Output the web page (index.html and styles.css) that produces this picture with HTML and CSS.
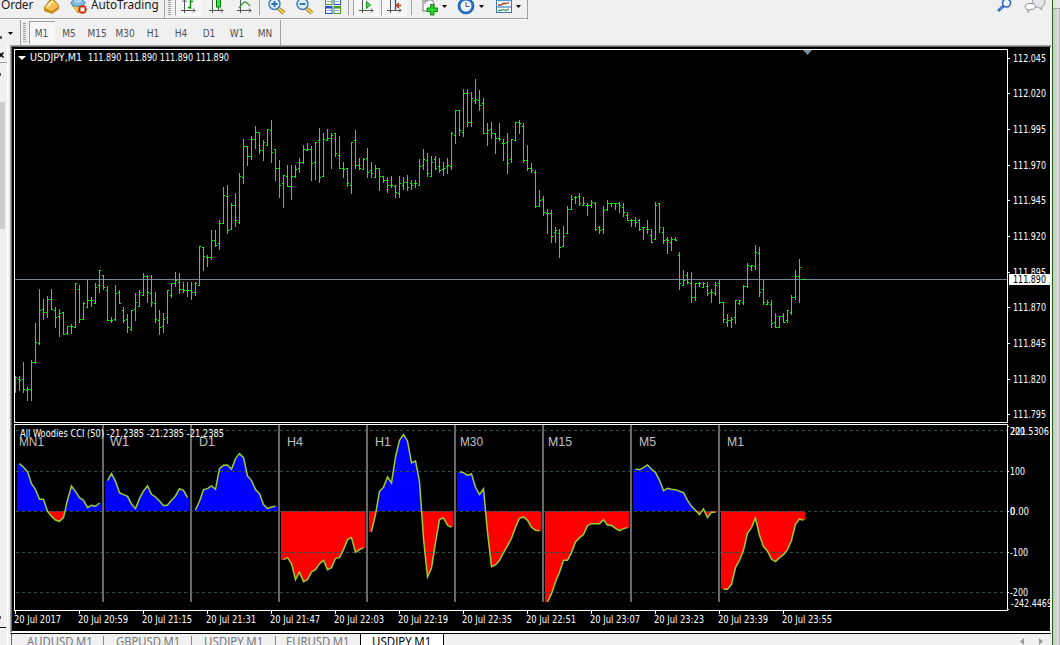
FILE: index.html
```html
<!DOCTYPE html>
<html lang="en">
<head>
<meta charset="utf-8">
<title>USDJPY,M1</title>
<link rel="stylesheet" href="styles.css">
</head>
<body>
<div class="app">
  <div class="main">
    <div class="bar-top">
      <div class="tools">
        <span class="cmd order">Order</span>
        <svg class="ico gold" width="19" height="18" viewBox="0 0 19 18"><path d="M2 8L8 0h4l5 6-7 7z" fill="#f2c14b" stroke="#b07b14"/><path d="M2 8l8 3 7-5v3l-7 5-8-3z" fill="#c98a1c"/><path d="M5 7l6-6" stroke="#fff2b8" stroke-width="2"/></svg>
        <svg class="ico auto" width="19" height="18" viewBox="0 0 19 18"><path d="M2 5l8 0 6 2-8 6z" fill="#f2cf4d" stroke="#c9961e"/><ellipse cx="8" cy="3" rx="7" ry="3.4" fill="#7db9e2" stroke="#4b86b4"/><ellipse cx="8" cy="0" rx="4" ry="3" fill="#a9d6f0"/><circle cx="12.500" cy="9.500" r="4.300" fill="#d8260f"/><rect x="10.500" y="7.500" width="4" height="4" fill="#fff"/></svg>
        <span class="cmd autotrading"><b>AutoTrading</b></span>
        <i class="sep sep-a"></i><i class="grip"></i>
        <span class="btn on"><svg width="16" height="14" viewBox="0 0 16 14"><path d="M3.500 0v13M0 10.500h14M12 8.500l2 2-2 2M1.500 2l2-2 2 2" class="axis"/><path d="M9.500 0v9M7 7.500h2M10 1.500h2" stroke="#0a930a" stroke-width="1.400" fill="none"/></svg></span>
        <span class="btn"><svg width="16" height="14" viewBox="0 0 16 14"><path d="M3.500 0v13M0 10.500h14M12 8.500l2 2-2 2" class="axis"/><path d="M9.500 0v10" stroke="#087808"/><rect x="7.500" y="-1" width="4" height="8" fill="#2ee648" stroke="#087808"/></svg></span>
        <span class="btn"><svg width="16" height="14" viewBox="0 0 16 14"><path d="M3.500 0v13M0 10.500h14M12 8.500l2 2-2 2" class="axis"/><path d="M2 8C5 5 6 2 8 2s3 2 5 4" stroke="#2f9c34" fill="none" stroke-width="1.300"/></svg></span>
        <i class="sep sep-b"></i>
        <span class="btn"><svg width="18" height="16" viewBox="0 0 18 16"><path d="M10 8l6 5" stroke="#b38212" stroke-width="4"/><path d="M10 8l6 5" stroke="#f3d35c" stroke-width="2"/><circle cx="6.500" cy="4" r="5.500" fill="#d8effb" stroke="#4580b5" stroke-width="1.500"/><path d="M3.500 4h6M6.500 1v6" stroke="#2c6ea6" stroke-width="1.800"/></svg></span>
        <span class="btn"><svg width="18" height="16" viewBox="0 0 18 16"><path d="M10 8l6 5" stroke="#b38212" stroke-width="4"/><path d="M10 8l6 5" stroke="#f3d35c" stroke-width="2"/><circle cx="6.500" cy="4" r="5.500" fill="#d8effb" stroke="#4580b5" stroke-width="1.500"/><path d="M3.500 4h6" stroke="#2c6ea6" stroke-width="1.800"/></svg></span>
        <span class="btn"><svg width="16" height="14" viewBox="0 0 16 14"><path d="M0 0h7.500v5H0zM8.500 6H16v8H8.500z" fill="#4a9a1c"/><path d="M8.500 0H16v5H8.500zM0 6h7.500v8H0z" fill="#2452cf"/><path d="M1 0h5.500v4H1zM9.500 0H15v4H9.500zM1 8.500h5.500V13H1zM9.500 8.500H15V13H9.500z" fill="#f4f8ff"/><path d="M2 1.500h4M10 1.500h4M2 10.500h4M10 10.500h4" stroke="#8faacb"/></svg></span>
        <i class="sep sep-c"></i>
        <span class="btn on"><svg width="16" height="14" viewBox="0 0 16 14"><path d="M3.500 0v13M0 10.500h14M12 8.500l2 2-2 2" class="axis"/><path d="M7.500 1.500l4 3.500-4 3.500z" fill="#3fe04e" stroke="#129020"/></svg></span>
        <span class="btn on btn-shift"><svg width="16" height="14" viewBox="0 0 16 14"><path d="M3.500 0v13M0 10.500h14M12 8.500l2 2-2 2" class="axis"/><path d="M8.500 0v10" stroke="#235e94" stroke-width="1.400"/><path d="M14 5.500H10M12 3L9.500 5.500 12 8" stroke="#b83a10" fill="none" stroke-width="1.500"/></svg></span>
        <i class="sep sep-d"></i>
        <svg class="ico doc" width="17" height="16" viewBox="0 0 17 16"><path d="M1 0h9l2 3v8H1z" fill="#fff" stroke="#777"/><path d="M3 4V1h3" stroke="#777" fill="none"/><path d="M8.500 4.500h3.500V8H15.500v3.500H12V15H8.500v-3.500H5V8h3.500z" fill="#28d628" stroke="#0b8a10"/></svg>
        <i class="drop d1"></i>
        <svg class="ico clock" width="18" height="16" viewBox="0 0 18 16"><circle cx="9" cy="6" r="6.800" fill="#eef6ff" stroke="#2572c8" stroke-width="2.600"/><circle cx="9" cy="6" r="7.900" fill="none" stroke="#164d92" stroke-width=".7"/><path d="M9 2v4.500h3.500" stroke="#555" fill="none"/></svg>
        <i class="drop d2"></i>
        <svg class="ico tpl" width="16" height="14" viewBox="0 0 16 14"><rect x=".5" y="-3" width="15" height="15.500" fill="#fff" stroke="#3978b7"/><path d="M1 .5h14M1 7h14" stroke="#5c9bd8" stroke-width="1.500"/><path d="M2 5h3l2-1.500h3l3-1" stroke="#9a3b16" fill="none" stroke-width="1.300"/><path d="M2 10.500h3l2-1 3 1 3-1.500" stroke="#3c9a4e" fill="none" stroke-width="1.300"/></svg>
        <i class="drop d3"></i>
      </div>
      <div class="right-tools">
        <svg width="15" height="13" viewBox="0 0 15 13"><path d="M1 11l5.500-5" stroke="#2b5fc2" stroke-width="3"/><path d="M2 10.500l4-4" stroke="#86aef0"/><circle cx="9.500" cy="3" r="4" fill="#eef5ff" stroke="#2c63c9" stroke-width="1.600"/></svg>
        <svg width="23" height="14" viewBox="0 0 23 14"><path d="M8-2h10c4 0 4 9-1 9l1 3-4-3h-4z" fill="#e8e8ec" stroke="#97979d"/><path d="M5 3.500h3c5 0 4 6 0 6H6l-2 3V9.500c-4-1-4-5 1-6z" fill="#fafafa" stroke="#8b8b90"/></svg>
      </div>
    </div>
    <div class="bar-periods">
      <span class="pmark"></span><i class="drop p0"></i>
      <div class="periods"><i class="grip g2"></i><span class="per sel">M1</span><span class="per">M5</span><span class="per">M15</span><span class="per">M30</span><span class="per">H1</span><span class="per">H4</span><span class="per">D1</span><span class="per">W1</span><span class="per">MN</span></div>
    </div>
    <div class="work">
      <div class="dock">
        <div class="dock-head"><svg width="5" height="7" viewBox="0 0 5 7"><path d="M-1 .5l4.500 5M3.500 .5L-1 5.500" stroke="#000" stroke-width="1.500"/></svg></div>
        <i class="dock-dot"></i><i class="dock-thumb"></i><i class="dock-dot low"></i><i class="dock-line"></i>
      </div>
      <div class="mdi">
        <div class="chart-window">
          <svg id="chart" width="1038" height="584" viewBox="12 47 1038 584"></svg>
        </div>
        <div class="tabs">
          <span class="tab t1"><b>AUDUSD,M1</b></span><span class="tab t2"><b>GBPUSD,M1</b></span><span class="tab t3"><b>USDJPY,M1</b></span><span class="tab t4"><b>EURUSD,M1</b></span><span class="tab active"><b>USDJPY,M1</b></span>
          <svg class="scrollers" width="24" height="9" viewBox="0 0 24 9"><path d="M4 1v7L0 4.500zM19 1v7l4-3.500z" fill="#999"/></svg>
        </div>
      </div>
    </div>
  </div>
  <div class="edge"><div class="edge-top"></div><div class="edge-bar"></div></div>
</div>
<script src="chart.js"></script>
</body>
</html>
```
FILE: styles.css
```css
* { box-sizing: border-box; }
body { margin: 0; width: 1060px; height: 645px; overflow: hidden; background: #f0f0f0; font-family: "DejaVu Sans Condensed", "DejaVu Sans", sans-serif; }
i, b { font-style: normal; font-weight: normal; }
.app { display: flex; width: 1060px; height: 645px; }
.main { width: 1052px; height: 645px; overflow: hidden; display: flex; flex-direction: column; }

.bar-top { display: flex; height: 20px; justify-content: space-between; }
.tools { display: flex; width: 528px; height: 20px; align-items: flex-start; border-bottom: 1px solid #fff; border-right: 1px solid #a0a0a0; box-shadow: inset 0 -1px #a0a0a0; overflow: hidden; }
.tools > * { flex: none; }
.cmd { font: 12px/16px "Noto Sans", "Open Sans", sans-serif; color: #1a1a1a; margin-top: -3px; white-space: nowrap; }
.order { width: 42px; padding-left: 1px; letter-spacing: -0.2px; }
.gold { width: 19px; }
.auto { margin-left: 9px; }
.autotrading { width: 74px; padding-left: 2px; }
.autotrading b { display: inline-block; transform: scaleX(.975); transform-origin: 0 0; }
.sep { width: 1px; height: 15px; background: #a0a0a0; }
.sep-a { margin-left: 1px; height: 18px; }
.grip { width: 3px; height: 15px; margin: 0 3px; background: repeating-linear-gradient(#a0a0a0 0 1px, #f0f0f0 1px 2px); }
.btn { width: 28px; height: 17px; display: flex; justify-content: center; padding-left: 1px; }
.btn svg { overflow: hidden; }
.btn.on { width: 26px; height: 16px; margin: 0 1px; background: repeating-conic-gradient(#fff 0 25%, #f0f0f0 0 50%) 0 0 / 2px 2px; border-left: 1px solid #a0a0a0; border-bottom: 1px solid #fff; }
.axis { stroke: #555; fill: none; }
.sep-b { margin-left: 1px; }
.sep-b + .btn { margin-left: 2px; }
.sep-c { margin-left: 2px; }
.sep-c + .btn { margin-left: 4px; }
.sep-d { margin-left: 3px; }
.doc { margin-left: 10px; }
.drop { width: 5px; height: 3px; background: #000; clip-path: polygon(0 0, 100% 0, 50% 100%); }
.d1 { margin: 5px 0 0 3px; }
.clock { margin-left: 10px; }
.d2 { margin: 5px 0 0 4px; }
.tpl { margin-left: 12px; }
.d3 { margin: 5px 0 0 4px; }
.right-tools { display: flex; gap: 12px; padding-right: 5px; }

.bar-periods { display: flex; height: 25px; width: 281px; border-right: 1px solid #a0a0a0; }
.pmark { width: 2px; height: 3px; margin-top: 16px; background: #555; }
.p0 { margin: 12px 7px 0 6px; flex: none; }
.periods { display: flex; border-left: 1px solid #a0a0a0; height: 25px; }
.g2 { height: 19px; margin: 3px 2px 0 2px; }
.per { width: 28px; height: 25px; padding-right: 2px; text-align: center; font-size: 10px; line-height: 27px; color: #505050; }
.per.sel { width: 26px; height: 23px; margin: 1px 1px 0; line-height: 24px; border-left: 1px solid #a0a0a0; border-top: 1px solid #a0a0a0; background: repeating-conic-gradient(#fff 0 25%, #f0f0f0 0 50%) 0 0 / 2px 2px; }

.work { display: flex; flex: 1; }
.dock { width: 10px; border-right: 2px solid #f0f0f0; box-shadow: inset -1px 0 #fff; display: flex; flex-direction: column; align-items: flex-start; }
.dock-head { width: 7px; height: 18px; padding-top: 7px; border-bottom: 1px solid #a0a0a0; display: flex; }
.dock-dot { width: 1px; height: 3px; background: #555; margin-top: 10px; }
.dock-thumb { width: 5px; height: 127px; background: #cdcdcd; margin-top: 26px; }
.dock-dot.low { margin-top: 387px; }
.dock-line { width: 6px; height: 1px; background: #000; margin-top: 8px; }
.mdi { width: 1041px; display: flex; flex-direction: column; }
.chart-window { height: 588px; width: 1041px; border-top: 1px solid #a0a0a0; border-left: 1px solid #a0a0a0; border-bottom: 1px solid #fff; background: #fff; box-shadow: inset 1px 1px #696969; padding: 1px 0 0 1px; }
.chart-window svg { display: block; background: #000; }
.tabs { display: flex; height: 12px; border-top: 1px solid #000; border-left: 1px solid #f0f0f0; overflow: hidden; }
.tab { height: 12px; font: 12px/16px "Noto Sans", "Open Sans", sans-serif; color: #777; padding-left: 11px; border-right: 1px solid transparent; background: linear-gradient(#888, #888) 100% 2px / 1px 9px no-repeat; }
.tab b { display: inline-block; transform-origin: 0 0; transform: scaleX(.94); white-space: nowrap; }
.t1 { width: 94px; padding-left: 15px; border-left: 1px solid #696969; }
.t2 { width: 88px; }
.t3 { width: 84px; }
.t3 b, .active b { transform: scaleX(.96); }
.t4 { width: 83px; padding-left: 9px; background: none; }
.tab.active { width: 84px; color: #000; background: #fff; border-left: 1px solid #000; border-right: 1px solid #000; margin-top: -1px; line-height: 18px; height: 13px; }
.scrollers { margin: 3px 7px 0 auto; flex: none; }

.edge { width: 8px; display: flex; flex-direction: column; border-left: 1px solid #1d6a12; }
.edge-top { height: 9px; background: #e5e5e5; border-bottom: 1px solid #a0a0a0; }
.edge-bar { flex: 1; background: linear-gradient(90deg, #c8c8c8, #dedede 80%, #b4b4b4 86%); }

text { font-family: "DejaVu Sans Condensed", "DejaVu Sans", sans-serif; font-size: 10px; fill: #fff; white-space: pre; }
.caption { font-family: "Liberation Sans", Arial, sans-serif; font-size: 13.5px; fill: #c0c0c0; }
.frame { fill: none; stroke: #fff; }
.bars { fill: #0f0; }
.dash { stroke: #2f4f4f; stroke-dasharray: 3 3; }
.cci { fill: none; stroke: #9acd32; stroke-width: 1.5; }
.dark { fill: #000; }
```
FILE: chart.js
```javascript
// Price bars, one per minute: high, low, open, close as chart rows.
const bars = `376,393,377,377 376,391,379,380 362,393,379,389 387,401,390,389 360,401,389,362 323,364,362,342 289,345,343,310 299,320,309,312 296,318,312,299 289,310,299,309
307,328,310,317 309,337,316,313 312,335,312,334 326,335,333,326 324,334,326,326 283,328,327,283 285,323,289,319 302,320,319,303 280,308,307,300 297,307,300,300
283,304,303,287 270,293,285,270 275,290,275,287 286,321,290,320 317,323,320,320 285,321,319,293 290,304,292,303 307,323,310,320 314,333,319,327 310,331,329,310
293,321,309,302 290,307,306,292 273,296,295,276 275,303,276,292 275,307,293,302 292,323,303,319 310,335,320,327 313,333,326,319 290,324,317,290 283,298,295,283
272,287,283,280 273,294,282,289 282,293,289,290 282,297,290,290 282,300,290,292 282,296,292,283 246,286,285,246 247,271,247,256 255,267,257,257 230,260,257,240
230,247,240,245 220,250,243,223 187,224,223,195 185,234,196,230 203,230,229,205 193,227,205,220 173,224,222,176 139,184,177,146 146,166,146,156 136,160,156,139
126,149,139,132 132,154,132,150 140,161,150,142 129,146,145,129 120,163,130,152 149,181,149,168 160,198,168,185 175,208,183,175 165,187,176,186 165,200,186,176
165,178,176,169 158,173,168,162 145,164,162,149 143,151,150,149 146,181,149,163 142,180,162,142 128,183,140,177 133,177,176,139 129,141,140,138 133,169,138,135
133,157,133,153 136,169,155,168 162,178,168,169 168,187,168,183 142,194,185,142 130,169,140,165 158,170,165,168 158,170,169,159 148,178,158,172 162,178,170,173
165,178,177,168 168,191,168,176 176,183,176,180 177,193,180,185 176,188,185,185 185,198,186,192 176,198,193,183 177,190,185,182 175,191,182,187 180,190,183,185
180,188,183,183 159,186,185,166 149,170,165,159 153,177,160,173 156,177,176,162 156,170,159,168 158,173,166,170 162,176,169,168 158,174,166,165 132,170,166,133
110,144,135,110 110,136,110,130 89,137,132,93 89,127,93,122 92,127,122,98 79,104,100,99 90,111,100,105 98,134,103,133 123,146,133,130 122,139,129,133
133,154,133,138 123,141,138,139 139,161,143,143 133,174,142,163 139,163,159,139 122,141,140,122 120,134,122,123 123,163,126,160 145,171,160,168 163,173,168,170
170,208,172,206 190,207,206,200 196,216,199,212 209,234,213,213 210,243,213,236 227,243,232,230 229,258,233,247 226,247,246,236 206,234,233,209 195,210,209,199
196,204,197,197 193,206,196,203 197,206,205,203 203,216,205,205 200,208,205,202 202,231,203,229 226,234,227,230 206,234,229,210 200,211,209,203 203,207,203,203
203,210,203,203 202,213,203,205 203,217,207,212 212,221,215,220 219,227,220,220 217,227,220,222 219,231,220,229 227,240,227,227 220,234,229,229 229,243,235,242
202,240,239,205 203,233,203,227 227,244,232,240 237,254,239,240 237,251,242,239 237,241,239,240 252,290,255,283 270,286,285,280 272,284,275,282 272,303,283,297
283,301,297,283 282,287,283,283 282,288,287,283 282,296,286,293 289,303,292,292 282,296,293,285 280,304,283,302 302,323,302,319 314,327,322,320 317,328,320,319
300,324,317,300 300,305,303,300 285,305,302,286 263,288,286,265 265,271,266,265 245,270,266,252 247,297,253,292 279,305,289,302 300,305,304,302 300,328,304,323
313,328,322,327 316,328,327,316 313,323,316,322 310,323,320,310 295,315,312,297 270,300,297,276 259,303,276,267`.split(/\s+/).map(b => b.split(',').map(Number));

// CCI curves per timeframe, in thirds of a row below y=420.
const panels = [
  ['MN1', 19, 25, [130,141,154,190,208,237,237,273,288,299,303,292,240,197,214,232,240,262,255,258,248]],
  ['W1', 110, 19, [181,160,183,217,223,228,251,265,235,212,197,222,230,242,256,254,240,227,205,210,232]],
  ['D1', 199, 16, [269,243,208,205,197,207,145,135,134,147,115,100,112,167,181,208,220,253,265,260,258]],
  ['H4', 287, 16, [418,412,430,478,455,484,478,455,448,430,420,448,442,414,412,388,358,352,396,388,382]],
  ['H1', 375, 16, [334,283,213,201,170,188,110,60,43,62,128,122,184,355,470,443,367,298,293,315,321]],
  ['M30', 460, 23, [155,157,165,161,201,223,206,335,439,434,420,397,377,354,321,294,290,300,321,330,331]],
  ['M15', 548, 24, [545,520,485,456,420,420,397,365,352,343,316,310,310,310,298,315,315,324,331,325,322]],
  ['M5', 639, 17, [146,148,142,134,147,156,180,211,204,207,208,213,217,240,258,270,283,266,292,276,276]],
  ['M1', 727, 17, [507,507,492,442,420,390,338,322,293,345,379,392,417,424,412,403,388,360,312,296,300]]
];

const out = [];
const rect = (x, y, w, h, fill) => out.push(`<rect x="${x}" y="${y}" width="${w}" height="${h}" fill="${fill}"/>`);
const text = (x, y, w, s, cls = '') => out.push(`<text x="${x}" y="${y}" textLength="${w}" lengthAdjust="spacingAndGlyphs" class="${cls}">${s}</text>`);

// Axis frames and current price line
out.push('<rect class="frame" x="14.5" y="49.5" width="993" height="373"/><rect class="frame" x="14.5" y="424.5" width="993" height="186"/>');
rect(15, 279, 992, 1, '#778899');
out.push('<path d="M803 50h9l-4.5 5z" fill="#778899"/><path d="M18 56h8l-4 4z" fill="#fff"/>');

let d = '';
bars.forEach(([hi, lo, open, close], i) => {
  const x = 15 + i * 4;
  d += `M${x} ${hi}h1V${lo}h-1z`;
  if (i) d += `M${x - 1} ${open}h1v1h-1z`;
  d += `M${x + 1} ${close}h1v1h-1z`;
});
out.push(`<path class="bars" shape-rendering="crispEdges" d="${d}M802 279h3v1h-3z"/>`);

// CCI histogram areas, split at the zero row
const zero = 511;
out.push(`<clipPath id="up"><rect x="15" y="425" width="992" height="86"/></clipPath><clipPath id="down"><rect x="15" y="${zero}" width="992" height="91"/></clipPath>`);
const curves = panels.map(([, , , v], p) => v.map((z, i) => [19.5 + p * 88 + i * 4, 420.3 + z / 3]));
curves.forEach(pts => {
  const a = pts[0], z = pts[pts.length - 1];
  const area = `M${a[0] - 2.5} ${zero}V${a[1]}L${pts.join(' ')}H${z[0] + 1.5}V${zero}z`;
  out.push(`<path d="${area}" fill="#00f" clip-path="url(#up)" shape-rendering="crispEdges"/><path d="${area}" fill="#f00" clip-path="url(#down)" shape-rendering="crispEdges"/>`);
});
[430, 471, 511, 552, 592].forEach(y => out.push(`<path class="dash" d="M16 ${y}.5H1007"/>`));
curves.forEach(pts => out.push(`<path class="cci" clip-path="url(#pane)" d="M${pts.join('L')}"/>`));
out.push('<clipPath id="pane"><rect x="15" y="425" width="992" height="177"/></clipPath>');
for (let i = 0; i < 8; i++) rect(102 + i * 88, 425, 2, 177, '#696969');
panels.forEach(([name, x, w]) => text(x, 446, w, name, 'caption'));

// Headers
text(30, 61, 52, 'USDJPY,M1');
text(88, 61, 141, '111.890 111.890 111.890 111.890');
text(20, 437, 204, 'All Woodies CCI (50) -21.2385 -21.2385 -21.2385');

// Price scale
[58, 93, 129, 165, 200, 236, 272, 307, 343, 379, 414].forEach((y, i) => {
  rect(1008, y, 2, 1, '#fff');
  text(1013, y + 4, 33, (112.045 - i * 0.025).toFixed(3));
});
rect(1009, 274, 41, 11, '#fff');
text(1013, 283, 33, '111.890', 'dark');

// Indicator scale
text(1010, 435, 15, '200');
text(1010, 435, 39, '221.5306');
text(1010, 475, 15, '100');
text(1010, 515, 19, '0.00');
text(1010, 515, 5, '0');
text(1010, 556, 18, '-100');
text(1010, 596, 18, '-200');
text(1011, 607, 41, '-242.4469');
[426, 471, 511, 552, 592, 609].forEach(y => rect(1008, y, 1, 1, '#fff'));

// Time scale
['2017', '20:59', '21:15', '21:31', '21:47', '22:03', '22:19', '22:35', '22:51', '23:07', '23:23', '23:39', '23:55'].forEach((t, i) => {
  rect(15 + i * 64, 611, 1, 3, '#fff');
  text(14 + i * 64, 623, i ? 50 : 47, '20 Jul ' + t);
});
document.getElementById('chart').innerHTML = out.join('');
```
